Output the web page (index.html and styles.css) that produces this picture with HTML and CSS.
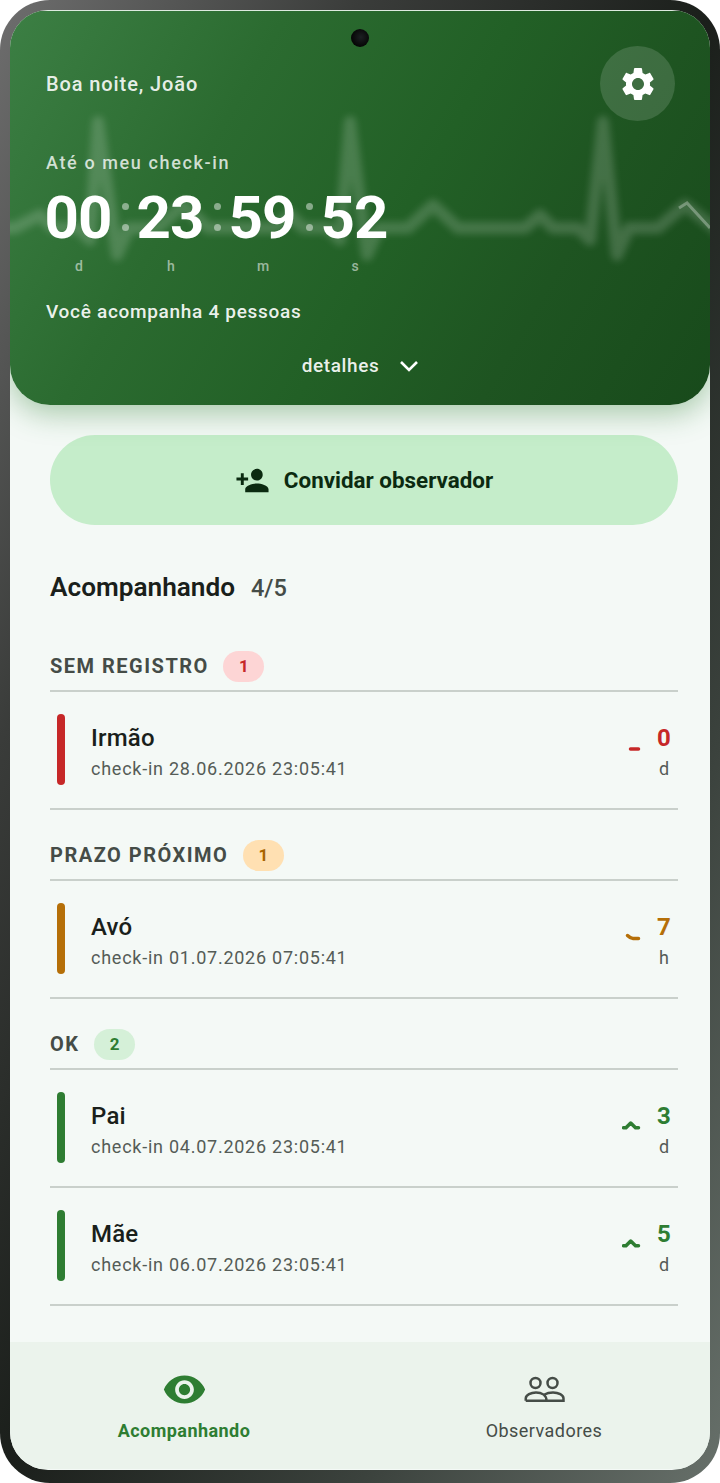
FILE: index.html
```html
<!DOCTYPE html>
<html lang="pt-BR">
<head>
    <meta charset="UTF-8">
    <meta name="viewport" content="width=device-width, initial-scale=1.0">
    <title>Acompanhando</title>
    <link rel="stylesheet" href="styles.css">
</head>
<body>
    <div class="phone">
        <div class="screen">
            <div class="camera"></div>

            <header class="hero">
                <svg class="ecg" viewBox="10 11 700 394" aria-hidden="true">
                    <path class="ecg-line" d="M0 228 H15 L40 215 L53 228 H78 L90 240 L98 122 L117 255 L129 228 H158 L183 205 L208 228 H275 L290 215 L303 228 H328 L340 240 L350 122 L367 255 L379 228 H408 L433 205 L458 228 H525 L540 215 L553 228 H578 L590 240 L603 122 L617 255 L629 228 H658 L685 205 L720 232"/>
                    <path class="ecg-tip" d="M679 208 L687 203 L710 228"/>
                </svg>

                <div class="hero-top">
                    <span class="greeting">Boa noite, João</span>
                    <button class="settings-btn" type="button" aria-label="Configurações">
                        <svg viewBox="0 0 24 24" width="40" height="40"><path fill="#fff" d="M19.14 12.94c.04-.3.06-.61.06-.94 0-.32-.02-.64-.07-.94l2.03-1.58c.18-.14.23-.41.12-.61l-1.92-3.32c-.12-.22-.37-.29-.59-.22l-2.39.96c-.5-.38-1.03-.7-1.62-.94l-.36-2.54c-.04-.24-.24-.41-.48-.41h-3.84c-.24 0-.43.17-.47.41l-.36 2.54c-.59.24-1.13.57-1.62.94l-2.39-.96c-.22-.08-.47 0-.59.22L2.74 8.87c-.12.21-.08.47.12.61l2.03 1.58c-.05.3-.09.63-.09.94s.02.64.07.94l-2.03 1.58c-.18.14-.23.41-.12.61l1.92 3.32c.12.22.37.29.59.22l2.39-.96c.5.38 1.03.7 1.62.94l.36 2.54c.05.24.24.41.48.41h3.84c.24 0 .44-.17.47-.41l.36-2.54c.59-.24 1.13-.56 1.62-.94l2.39.96c.22.08.47 0 .59-.22l1.92-3.32c.12-.22.07-.47-.12-.61l-2.01-1.58zM12 15.6c-1.98 0-3.6-1.62-3.6-3.6s1.62-3.6 3.6-3.6 3.6 1.62 3.6 3.6-1.62 3.6-3.6 3.6z"/></svg>
                    </button>
                </div>

                <div class="countdown-label">Até o meu check-in</div>
                <div class="countdown">
                    <div class="unit"><span class="digits">00</span><span class="unit-label">d</span></div>
                    <div class="sep"><i></i><i></i></div>
                    <div class="unit"><span class="digits">23</span><span class="unit-label">h</span></div>
                    <div class="sep"><i></i><i></i></div>
                    <div class="unit"><span class="digits">59</span><span class="unit-label">m</span></div>
                    <div class="sep"><i></i><i></i></div>
                    <div class="unit"><span class="digits">52</span><span class="unit-label">s</span></div>
                </div>

                <div class="following">Você acompanha 4 pessoas</div>
                <div class="details">
                    <span>detalhes</span>
                    <svg viewBox="0 0 20 12" width="20" height="12"><path d="M2 2 L10 10 L18 2" fill="none" stroke="#fff" stroke-width="2.6"/></svg>
                </div>
            </header>

            <main class="content">
                <button class="invite-btn" type="button">
                    <svg viewBox="0 0 24 24" width="35" height="35"><path fill="#0b2a10" d="M15 12c2.21 0 4-1.79 4-4s-1.79-4-4-4-4 1.79-4 4 1.79 4 4 4zm-9-2V7H4v3H1v2h3v3h2v-3h3v-2H6zm9 4c-2.67 0-8 1.34-8 4v2h16v-2c0-2.66-5.33-4-8-4z"/></svg>
                    <span>Convidar observador</span>
                </button>

                <div class="list-title">
                    <h2>Acompanhando</h2>
                    <span class="list-count">4/5</span>
                </div>

                <section class="group red">
                    <div class="group-head"><span class="group-name">SEM REGISTRO</span><span class="badge">1</span></div>
                    <div class="person">
                        <div class="person-bar"></div>
                        <div class="person-info">
                            <div class="person-name">Irmão</div>
                            <div class="person-sub">check-in 28.06.2026 23:05:41</div>
                        </div>
                        <svg class="trend" viewBox="0 0 20 12"><path d="M8.5 6 H16.5"/></svg>
                        <div class="remain"><div class="remain-value">0</div><div class="remain-unit">d</div></div>
                    </div>
                </section>

                <section class="group orange">
                    <div class="group-head"><span class="group-name">PRAZO PRÓXIMO</span><span class="badge">1</span></div>
                    <div class="person">
                        <div class="person-bar"></div>
                        <div class="person-info">
                            <div class="person-name">Avó</div>
                            <div class="person-sub">check-in 01.07.2026 07:05:41</div>
                        </div>
                        <svg class="trend" viewBox="0 0 20 12"><path d="M5.5 3.5 Q8.5 6.5 11 6.5 H16.5"/></svg>
                        <div class="remain"><div class="remain-value">7</div><div class="remain-unit">h</div></div>
                    </div>
                </section>

                <section class="group green">
                    <div class="group-head"><span class="group-name">OK</span><span class="badge">2</span></div>
                    <div class="person">
                        <div class="person-bar"></div>
                        <div class="person-info">
                            <div class="person-name">Pai</div>
                            <div class="person-sub">check-in 04.07.2026 23:05:41</div>
                        </div>
                        <svg class="trend" viewBox="0 0 20 12"><path d="M1.5 6.8 H4 L8.7 2 L13.5 6.8 H16.5"/></svg>
                        <div class="remain"><div class="remain-value">3</div><div class="remain-unit">d</div></div>
                    </div>
                    <div class="person">
                        <div class="person-bar"></div>
                        <div class="person-info">
                            <div class="person-name">Mãe</div>
                            <div class="person-sub">check-in 06.07.2026 23:05:41</div>
                        </div>
                        <svg class="trend" viewBox="0 0 20 12"><path d="M1.5 6.8 H4 L8.7 2 L13.5 6.8 H16.5"/></svg>
                        <div class="remain"><div class="remain-value">5</div><div class="remain-unit">d</div></div>
                    </div>
                </section>
            </main>

            <nav class="bottom-nav">
                <div class="nav-item active">
                    <svg viewBox="0 0 24 24" width="45" height="45"><path fill="#2e7d32" d="M12 4.5C7 4.5 2.73 7.61 1 12c1.73 4.39 6 7.5 11 7.5s9.27-3.11 11-7.5c-1.73-4.39-6-7.5-11-7.5zM12 17c-2.76 0-5-2.24-5-5s2.24-5 5-5 5 2.24 5 5-2.24 5-5 5zm0-8c-1.66 0-3 1.34-3 3s1.34 3 3 3 3-1.34 3-3-1.34-3-3-3z"/></svg>
                    <span>Acompanhando</span>
                </div>
                <div class="nav-item">
                    <svg viewBox="0 0 45 45" width="45" height="45" fill="none" stroke="#454c47" stroke-width="2.5"><circle cx="13.5" cy="16" r="5"/><circle cx="30.5" cy="16" r="5"/><path d="M3.75 33.75 V31.5 C3.75 28 9 25.5 14 25.5 C19.5 25.5 24.5 28 24.5 33.75 M3.75 33.75 H41.5 V31.5 C41.5 28 36.5 25.5 31 25.5 C28 25.5 25 26 22.5 27.5"/></svg>
                    <span>Observadores</span>
                </div>
            </nav>
        </div>
    </div>
</body>
</html>
```

FILE: styles.css
```css
* {
    margin: 0;
    padding: 0;
    box-sizing: border-box;
}

body {
    font-family: Roboto, "Noto Sans", sans-serif;
    background: #fff;
    color: #1a1f1b;
}

.phone {
    width: 720px;
    height: 1483px;
    padding: 10px 10px 13px;
    border-radius: 50px;
    background: linear-gradient(to bottom right, #6e6e6e 0%, #3a3c3a 25%, #1b1f1b 50%, #3b423d 75%, #67706a 100%);
}

.screen {
    position: relative;
    display: flex;
    flex-direction: column;
    height: 100%;
    padding: 1px 0;
    border-radius: 38px;
    overflow: hidden;
    background: #f4f9f6;
}

.camera {
    position: absolute;
    top: 19px;
    left: 341px;
    z-index: 3;
    width: 18px;
    height: 18px;
    border-radius: 50%;
    background: radial-gradient(circle at 55% 45%, #1c1f22 0%, #050505 70%);
}

/* hero */
.hero {
    position: relative;
    z-index: 2;
    height: 394px;
    padding: 35px 35px 0 36px;
    border-radius: 0 0 40px 40px;
    color: #fff;
    background: linear-gradient(120deg, #3c7f44 0%, #2b6b30 30%, #226026 55%, #1e5421 75%, #184a1b 100%);
    box-shadow: 0 8px 30px rgba(46, 125, 50, 0.4);
}

.ecg {
    position: absolute;
    top: 0;
    left: 0;
    width: 700px;
    height: 394px;
    border-radius: 0 0 40px 40px;
}

.ecg-line {
    fill: none;
    stroke: rgba(255, 255, 255, 0.17);
    stroke-width: 12;
    stroke-linejoin: round;
    filter: blur(3.5px);
}

.ecg-tip {
    fill: none;
    stroke: rgba(255, 255, 255, 0.3);
    stroke-width: 3;
}

.hero-top {
    position: relative;
    display: flex;
    align-items: center;
    justify-content: space-between;
    height: 75px;
}

.greeting {
    font-size: 20px;
    font-weight: 500;
    letter-spacing: 0.9px;
    color: rgba(255, 255, 255, 0.9);
}

.settings-btn {
    display: flex;
    align-items: center;
    justify-content: center;
    width: 75px;
    height: 75px;
    border: 0;
    border-radius: 50%;
    background: rgba(255, 255, 255, 0.14);
}

.countdown-label {
    position: relative;
    margin-top: 30px;
    font-size: 18px;
    line-height: 24px;
    font-weight: 500;
    letter-spacing: 1.62px;
    color: rgba(255, 255, 255, 0.78);
}

.countdown {
    position: relative;
    display: flex;
    margin-top: 13px;
}

.unit {
    display: flex;
    flex-direction: column;
    align-items: center;
    width: 66px;
}

.digits {
    margin-left: -2px;
    font-size: 60px;
    line-height: 60px;
    font-weight: 700;
    letter-spacing: -1px;
}

.unit-label {
    margin-top: 10px;
    font-size: 14px;
    line-height: 16px;
    font-weight: 500;
    color: rgba(255, 255, 255, 0.55);
}

.sep {
    display: flex;
    flex-direction: column;
    align-items: center;
    gap: 14px;
    width: 26px;
    height: 60px;
    padding-top: 15px;
}

.sep i {
    width: 7px;
    height: 7px;
    border-radius: 50%;
    background: rgba(255, 255, 255, 0.45);
}

.following {
    position: relative;
    margin-top: 26px;
    font-size: 19px;
    line-height: 24px;
    font-weight: 500;
    letter-spacing: 0.7px;
    color: rgba(255, 255, 255, 0.92);
}

.details {
    position: relative;
    display: flex;
    align-items: center;
    justify-content: center;
    gap: 20px;
    margin-top: 30px;
    font-size: 19px;
    line-height: 24px;
    font-weight: 500;
    letter-spacing: 0.6px;
    color: rgba(255, 255, 255, 0.92);
}

/* list */
.content {
    flex: 1;
    padding: 30px 32px 0 40px;
}

.invite-btn {
    display: flex;
    align-items: center;
    justify-content: center;
    gap: 14px;
    width: 100%;
    height: 90px;
    border: 0;
    border-radius: 45px;
    background: #c5edca;
    color: #0b2a10;
    font-family: inherit;
    font-size: 22.4px;
    font-weight: 700;
}

.list-title {
    display: flex;
    align-items: baseline;
    gap: 16px;
    margin-top: 45px;
    line-height: 34px;
}

.list-title h2 {
    font-size: 26.2px;
    font-weight: 600;
}

.list-count {
    font-size: 23.5px;
    font-weight: 500;
    color: #454c47;
}

.group {
    margin-top: 30px;
}

.list-title + .group {
    margin-top: 46px;
}

.group-head {
    display: flex;
    align-items: center;
    gap: 14.5px;
    height: 41px;
    padding-bottom: 9px;
    border-bottom: 2px solid #c9d0cb;
}

.group-name {
    font-size: 20px;
    font-weight: 700;
    letter-spacing: 1.5px;
    color: #454c47;
}

.badge {
    width: 41px;
    height: 31px;
    border-radius: 16px;
    font-size: 17px;
    font-weight: 700;
    line-height: 31px;
    text-align: center;
}

.person {
    display: flex;
    align-items: center;
    height: 118px;
    padding: 0 7px 2px 7px;
    border-bottom: 2px solid #c9d0cb;
}

.person-bar {
    flex: none;
    width: 8px;
    height: 71px;
    border-radius: 4px;
}

.person-info {
    flex: 1;
    margin-left: 26px;
    padding-top: 6px;
}

.person-name {
    font-size: 24px;
    line-height: 28px;
    font-weight: 500;
    letter-spacing: 0.2px;
}

.person-sub {
    margin-top: 5px;
    font-size: 18px;
    line-height: 24px;
    letter-spacing: 0.75px;
    color: #555c57;
}

.trend {
    width: 20px;
    height: 12px;
    margin-right: 15px;
    fill: none;
    stroke: currentColor;
    stroke-width: 3.5;
    stroke-linecap: round;
    stroke-linejoin: round;
}

.remain {
    width: 14px;
    padding-top: 6px;
    text-align: center;
}

.remain-value {
    font-size: 24px;
    line-height: 28px;
    font-weight: 700;
}

.remain-unit {
    margin-top: 5px;
    font-size: 18px;
    line-height: 24px;
    color: #555c57;
}

.group.red .person-bar { background: #c62828; }
.group.red .badge { background: #fdd5d5; color: #c62828; }
.group.red .trend, .group.red .remain-value { color: #c62828; }

.group.orange .person-bar { background: #b56f08; }
.group.orange .badge { background: #ffe0b2; color: #a86400; }
.group.orange .trend, .group.orange .remain-value { color: #b56f08; }

.group.green .person-bar { background: #2e7d32; }
.group.green .badge { background: #d5f0d8; color: #2e7d32; }
.group.green .trend, .group.green .remain-value { color: #2e7d32; }

/* bottom nav */
.bottom-nav {
    display: flex;
    gap: 220px;
    height: 127px;
    padding: 25px 0 0 104px;
    background: #ebf3ec;
}

.nav-item {
    display: flex;
    flex-direction: column;
    align-items: center;
    width: 140px;
    font-size: 18px;
    letter-spacing: 0.45px;
    color: #454c47;
}

.nav-item span {
    margin-top: 8px;
    white-space: nowrap;
}

.nav-item.active {
    font-weight: 700;
    color: #2e7d32;
}
```
